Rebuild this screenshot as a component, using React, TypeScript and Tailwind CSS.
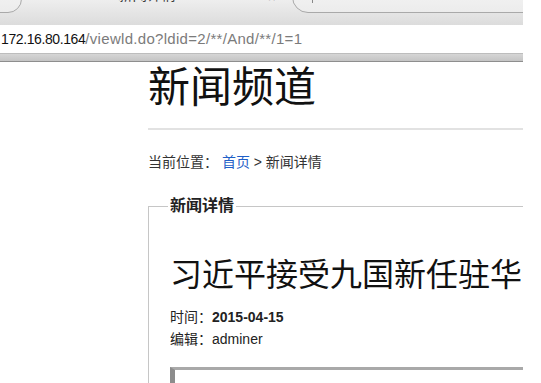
import React from "react";

const FONT = "font-['Liberation_Sans','Noto_Sans_CJK_SC',sans-serif]";

export default function App() {
  return (
    <div className={`flex h-[383px] w-[541px] overflow-hidden bg-white ${FONT}`}>
      <div className="flex w-[523px] shrink-0 flex-col overflow-hidden">
        {/* tab strip */}
        <div className="relative h-[25px] shrink-0 overflow-hidden bg-gradient-to-b from-[#eeeeee] to-[#dcdcdc]">
          <div className="absolute left-[-100px] top-[-20px] h-[33px] w-[122px] rounded-br-[14px] border border-[#a9a9a9] bg-gradient-to-b from-[#f6f6f6] to-[#ececec]" />
          <div className="absolute left-[118px] top-[-13px] whitespace-nowrap text-[14.5px] leading-[16px] text-[#3a3a3a]">
            新闻详情
          </div>
          <div className="absolute left-[268px] top-[-8px] text-[13px] leading-[12px] text-[#777]">×</div>
          <div className="absolute left-[292px] top-[-20px] h-[33px] w-[300px] rounded-bl-[16px] border border-[#a9a9a9] bg-gradient-to-b from-[#f6f6f6] to-[#ececec]" />
          <div className="absolute left-[312px] top-0 h-[3px] w-px bg-[#888]" />
        </div>

        {/* address */}
        <div className="flex h-[28px] shrink-0 items-center whitespace-nowrap bg-white pl-px">
          <span className="text-[14px] tracking-[-0.4px] text-[#111]">172.16.80.164</span>
          <span className="text-[15px] tracking-[0.3px] text-[#7b7b7b]">/viewld.do?ldid=2/**/And/**/1=1</span>
        </div>

        {/* toolbar edge */}
        <div className="h-[9px] shrink-0 border-t border-b border-t-[#bdbdbd] border-b-[#8e8e8e] bg-gradient-to-b from-[#d6d6d6] to-[#c4c4c4]" />

        {/* page */}
        <div className="flex flex-col pl-[148px] text-[#222]">
          <h1 className="mt-[2px] whitespace-nowrap text-[42px] leading-[48px] text-[#111]">新闻频道</h1>
          <div className="mt-[16px] h-[2px] bg-[#e2e2e2]" />

          <div className="mt-[22px] whitespace-nowrap text-[14px] leading-[20px] text-[#333]">
            当前位置： <a href="#" className="text-[#1f5fc8]">首页</a> &gt; 新闻详情
          </div>

          <fieldset className="mt-[24px] border border-[#c6c6c6] pb-[40px] pl-[19px]">
            <legend className="px-[2px] text-[16px] font-bold leading-[20px] text-[#222]">新闻详情</legend>

            <div className="ml-[2px] flex flex-col">
              <h2 className="mt-[39px] whitespace-nowrap text-[32px] leading-[40px] text-[#111]">
                习近平接受九国新任驻华大使递交国书
              </h2>
              <div className="mt-[11px] text-[14px] leading-[22px] text-[#222]">
                时间：<b>2015-04-15</b>
              </div>
              <div className="text-[14px] leading-[22px] text-[#222]">编辑：adminer</div>

              <div className="mt-[17px] h-[60px] border-l-[5px] border-t-[3px] border-l-[#8c8c8c] border-t-[#a9a9a9] bg-white" />
            </div>
          </fieldset>
        </div>
      </div>
    </div>
  );
}
